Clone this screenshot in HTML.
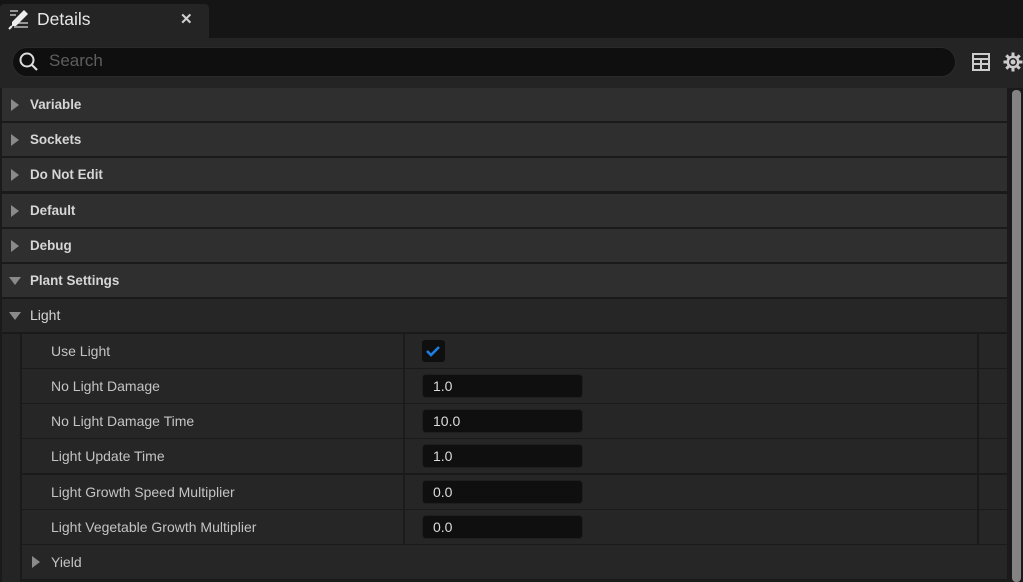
<!DOCTYPE html>
<html><head><meta charset="utf-8"><style>
*{margin:0;padding:0;box-sizing:border-box}
body{width:1023px;height:582px;background:#1a1a1a;position:relative;overflow:hidden;font-family:"Liberation Sans",sans-serif;}
.abs{position:absolute}
.cat{position:absolute;left:2px;width:1005px;height:33px;background:#2f2f2f;color:#d6d6d6;font-weight:bold;font-size:13.4px;line-height:33px;padding-left:28px}
.tri{position:absolute;left:9px;top:11px;width:0;height:0;border-top:6px solid transparent;border-bottom:6px solid transparent;border-left:8px solid #8a8a8a}
.tridn{position:absolute;left:7px;top:13px;width:0;height:0;border-left:6px solid transparent;border-right:6px solid transparent;border-top:8px solid #8a8a8a}
.prow{position:absolute;left:22px;width:955px;height:34px;background:#262626;color:#c4c4c4;font-size:14px;line-height:34px;padding-left:29px}
.pcell{position:absolute;left:381px;top:0;width:574px;height:34px;border-left:2px solid #1c1c1c}
.inp{position:absolute;left:17px;top:5px;width:161px;height:24px;background:#0f0f0f;border:1px solid #1f1f1f;border-radius:4px;color:#dcdcdc;font-size:14px;line-height:22px;padding-left:10px}
.ext{position:absolute;left:979px;width:28px;height:34px;background:#262626}
</style></head><body>
<div class="abs" style="left:0;top:0;width:1023px;height:38px;background:#151515"></div>
<div class="abs" style="left:0;top:4px;width:209px;height:34px;background:#242424;border-radius:4px 4px 0 0"></div>
<svg class="abs" style="left:7px;top:9px" width="24" height="22" viewBox="0 0 24 22">
<path d="M3 2h8M3 6h6M9 14h12M7 18h14" stroke="#bbb" stroke-width="1.5"/>
<path d="M17 1l4 4L9 17H5v-4z" fill="#eee"/><path d="M5 17l-3 3" stroke="#eee" stroke-width="2"/></svg>
<div class="abs" style="left:37px;top:9px;color:#e6e6e6;font-size:17.5px">Details</div>
<div class="abs" style="left:180px;top:10px;color:#d0d0d0;font-size:15px;font-weight:bold">✕</div>
<div class="abs" style="left:0;top:38px;width:1023px;height:50px;background:#242424"></div>
<div class="abs" style="left:12px;top:47px;width:944px;height:30px;background:#0f0f0f;border:1px solid #2a2a2a;border-radius:15px"></div>
<svg class="abs" style="left:18px;top:51px" width="22" height="22"><circle cx="9" cy="9" r="6.5" stroke="#ddd" stroke-width="2" fill="none"/><path d="M14 14l5 5" stroke="#ddd" stroke-width="2.2"/></svg>
<div class="abs" style="left:49px;top:51px;color:#5e5e5e;font-size:17px">Search</div>
<svg class="abs" style="left:972px;top:53px" width="18" height="18"><rect x="1" y="1" width="16" height="16" fill="none" stroke="#ccc" stroke-width="2"/><path d="M1 6h16M1 11h16M9 6v11" stroke="#ccc" stroke-width="2"/></svg>
<svg class="abs" style="left:1003px;top:52px" width="20" height="20" viewBox="0 0 20 20"><g fill="#ccc"><circle cx="10" cy="10" r="6.5"/><rect x="8.5" y="0.5" width="3" height="19"/><rect x="0.5" y="8.5" width="19" height="3"/><rect x="8.5" y="0.5" width="3" height="19" transform="rotate(45 10 10)"/><rect x="8.5" y="0.5" width="3" height="19" transform="rotate(-45 10 10)"/></g><circle cx="10" cy="10" r="4" fill="#242424"/><circle cx="10" cy="10" r="2.5" fill="#ccc"/></svg>
<div class="abs" style="left:1012px;top:90px;width:9px;height:492px;background:#838383;border-radius:4px"></div>

<div class="cat" style="top:88px"><span class="tri"></span>Variable</div>
<div class="cat" style="top:123px"><span class="tri"></span>Sockets</div>
<div class="cat" style="top:158px"><span class="tri"></span>Do Not Edit</div>
<div class="cat" style="top:194px"><span class="tri"></span>Default</div>
<div class="cat" style="top:229px"><span class="tri"></span>Debug</div>
<div class="cat" style="top:264px"><span class="tridn"></span>Plant Settings</div>
<div class="cat" style="top:299px;background:#262626;font-weight:normal;font-size:14px"><span class="tridn"></span>Light</div>

<div class="prow" style="top:334px">Use Light<div class="pcell"><div class="abs" style="left:17px;top:6px;width:23px;height:22px;background:#0f0f0f;border-radius:3px"><svg width="23" height="22"><path d="M5 11l4 4 8-8" stroke="#1e7ee0" stroke-width="2.6" fill="none"/></svg></div></div></div>
<div class="prow" style="top:369px">No Light Damage<div class="pcell"><div class="inp">1.0</div></div></div>
<div class="prow" style="top:404px">No Light Damage Time<div class="pcell"><div class="inp">10.0</div></div></div>
<div class="prow" style="top:439px">Light Update Time<div class="pcell"><div class="inp">1.0</div></div></div>
<div class="prow" style="top:475px">Light Growth Speed Multiplier<div class="pcell"><div class="inp">0.0</div></div></div>
<div class="prow" style="top:510px">Light Vegetable Growth Multiplier<div class="pcell"><div class="inp">0.0</div></div></div>
<div class="prow" style="top:545px;width:985px">Yield<span class="tri" style="left:10px"></span></div>
<div class="ext" style="top:334px"></div><div class="ext" style="top:369px"></div><div class="ext" style="top:404px"></div><div class="ext" style="top:439px"></div><div class="ext" style="top:475px"></div><div class="ext" style="top:510px"></div>
<div class="abs" style="left:2px;top:334px;width:18px;height:248px;background:#242424"></div>
</body></html>
